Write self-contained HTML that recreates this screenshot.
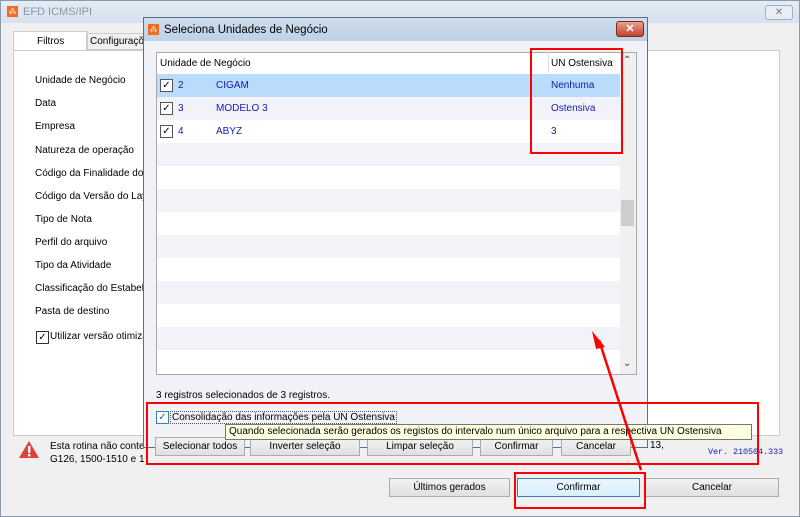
<!DOCTYPE html>
<html><head><meta charset="utf-8"><style>
*{box-sizing:border-box;margin:0;padding:0}
body{width:800px;height:517px;overflow:hidden;background:#f0f0f0;font-family:"Liberation Sans",sans-serif;font-size:10px;color:#000;position:relative}
.a{position:absolute;white-space:nowrap}
.btn{position:absolute;height:19px;border:1px solid #acacac;background:linear-gradient(#f2f2f2,#e0e0e0);text-align:center;line-height:17px;font-size:10px;white-space:nowrap;overflow:hidden}
.lbl{position:absolute;left:35px;font-size:10px;white-space:nowrap}
.cb{position:absolute;width:13px;height:13px;border:1px solid #333;background:#fff;font-size:10px;line-height:11px;text-align:center}
.row{position:absolute;left:157px;width:463px;height:23px}
.red{position:absolute;border:2px solid #f00}
</style></head><body>
<div class="a" style="left:0;top:0;width:800px;height:517px;border:1px solid #8a9aad;background:#f0f0f0"></div>
<div class="a" style="left:1px;top:1px;width:798px;height:22px;background:linear-gradient(#e4ecf5,#d6e2ef)"></div>
<div class="a" style="left:7px;top:6px;width:11px;height:11px;background:#f26b1d;color:#fff;font-size:8px;line-height:11px;text-align:center">⁂</div>
<div class="a" style="left:23px;top:6px;color:#8a96a4;font-size:11px">EFD ICMS/IPI</div>
<div class="a" style="left:765px;top:5px;width:28px;height:15px;border:1px solid #aab;border-radius:3px;background:#e8eef5;text-align:center;font-size:10px;color:#777;line-height:13px">✕</div>
<div class="a" style="left:13px;top:31px;width:74px;height:20px;background:#fff;border:1px solid #ccc;border-bottom:none;padding:4px 0 0 23px">Filtros</div>
<div class="a" style="left:87px;top:33px;width:70px;height:17px;background:#f0f0f0;border:1px solid #ccc;padding:2px 0 0 2px;overflow:hidden">Configuraçõ</div>
<div class="a" style="left:13px;top:50px;width:767px;height:386px;background:#fff;border:1px solid #ccc"></div>
<div class="lbl" style="top:75px">Unidade de Negócio</div>
<div class="lbl" style="top:98px">Data</div>
<div class="lbl" style="top:121px">Empresa</div>
<div class="lbl" style="top:145px">Natureza de operação</div>
<div class="lbl" style="top:168px">Código da Finalidade do A</div>
<div class="lbl" style="top:191px">Código da Versão do Layo</div>
<div class="lbl" style="top:214px">Tipo de Nota</div>
<div class="lbl" style="top:237px">Perfil do arquivo</div>
<div class="lbl" style="top:260px">Tipo da Atividade</div>
<div class="lbl" style="top:283px">Classificação do Estabele</div>
<div class="lbl" style="top:306px">Pasta de destino</div>
<div class="cb" style="left:36px;top:331px">✓</div>
<div class="lbl" style="left:50px;top:331px">Utilizar versão otimiza</div>
<svg class="a" style="left:18px;top:440px" width="22" height="19"><polygon points="11,1 21,18 1,18" fill="#e0403a"/><rect x="10" y="6" width="2.4" height="7" fill="#fff"/><rect x="10" y="14" width="2.4" height="2.4" fill="#fff"/></svg>
<div class="a" style="left:50px;top:440px;line-height:13px">Esta rotina não conte<br>G126, 1500-1510 e 1</div>
<div class="a" style="left:650px;top:440px">13,</div>
<div class="a" style="left:708px;top:447px;color:#1a1aa8;font-family:'Liberation Mono',monospace;font-size:8.5px;letter-spacing:-0.1px">Ver. 210504.333</div>
<div class="btn" style="left:389px;top:478px;width:121px">Últimos gerados</div>
<div class="btn" style="left:517px;top:478px;width:123px;border-color:#3c7fb1;background:linear-gradient(#eaf6fd,#d9f0fc)">Confirmar</div>
<div class="btn" style="left:645px;top:478px;width:134px">Cancelar</div>
<div class="a" style="left:143px;top:17px;width:505px;height:431px;border:1px solid #5a6e88;background:#f0f2f8"></div>
<div class="a" style="left:144px;top:18px;width:503px;height:23px;background:linear-gradient(#cfdded,#bfd1e6)"></div>
<div class="a" style="left:148px;top:24px;width:11px;height:11px;background:#f26b1d;color:#fff;font-size:8px;line-height:11px;text-align:center">⁂</div>
<div class="a" style="left:164px;top:24px;font-size:11.5px">Seleciona Unidades de Negócio</div>
<div class="a" style="left:616px;top:21px;width:28px;height:16px;border:1px solid #7a2c20;border-radius:3px;background:linear-gradient(#e8a090,#c4422c);color:#fff;text-align:center;font-size:11px;line-height:14px;font-weight:bold">✕</div>
<div class="a" style="left:156px;top:52px;width:481px;height:323px;background:#fff;border:1px solid #aaa"></div>
<div class="a" style="left:160px;top:58px">Unidade de Negócio</div>
<div class="a" style="left:548px;top:52px;width:1px;height:21px;background:#ddd"></div>
<div class="a" style="left:551px;top:58px">UN Ostensiva</div>
<div class="row" style="top:74px;background:#b9dcfb"></div>
<div class="row" style="top:97px;background:#f2f3f8"></div>
<div class="row" style="top:143px;background:#f2f3f8"></div>
<div class="row" style="top:189px;background:#f2f3f8"></div>
<div class="row" style="top:235px;background:#f2f3f8"></div>
<div class="row" style="top:281px;background:#f2f3f8"></div>
<div class="row" style="top:327px;background:#f2f3f8"></div>
<div class="cb" style="left:160px;top:79px;border-color:#555">✓</div>
<div class="cb" style="left:160px;top:102px;border-color:#555">✓</div>
<div class="cb" style="left:160px;top:125px;border-color:#555">✓</div>
<div class="a" style="left:178px;top:80px;color:#1a1aa8">2</div><div class="a" style="left:216px;top:80px;color:#1a1aa8">CIGAM</div><div class="a" style="left:551px;top:80px;color:#1a1aa8">Nenhuma</div>
<div class="a" style="left:178px;top:103px;color:#1a1aa8">3</div><div class="a" style="left:216px;top:103px;color:#1a1aa8">MODELO 3</div><div class="a" style="left:551px;top:103px;color:#1a1aa8">Ostensiva</div>
<div class="a" style="left:178px;top:126px;color:#1a1aa8">4</div><div class="a" style="left:216px;top:126px;color:#1a1aa8">ABYZ</div><div class="a" style="left:551px;top:126px;color:#1a1aa8">3</div>
<div class="a" style="left:620px;top:53px;width:16px;height:321px;background:#f0f0f0"></div>
<div class="a" style="left:621px;top:200px;width:13px;height:26px;background:#cdcdcd"></div>
<div class="a" style="left:623px;top:55px;font-size:10px;color:#444">⌃</div>
<div class="a" style="left:623px;top:358px;font-size:10px;color:#444">⌄</div>
<div class="a" style="left:156px;top:390px">3 registros selecionados de 3 registros.</div>
<div class="cb" style="left:156px;top:411px;border-color:#3c7fb1;color:#1a6fc0">✓</div>
<div class="a" style="left:170px;top:411px;border:1px dotted #555;padding:0 1px">Consolidação das informações pela UN Ostensiva</div>
<div class="btn" style="left:155px;top:437px;width:90px">Selecionar todos</div>
<div class="btn" style="left:250px;top:437px;width:110px">Inverter seleção</div>
<div class="btn" style="left:367px;top:437px;width:106px">Limpar seleção</div>
<div class="btn" style="left:480px;top:437px;width:73px">Confirmar</div>
<div class="btn" style="left:561px;top:437px;width:70px">Cancelar</div>
<div class="a" style="left:225px;top:424px;width:527px;height:16px;background:#ffffe1;border:1px solid #767676;font-size:10px;line-height:14px;padding-left:3px;overflow:hidden">Quando selecionada serão gerados os registos do intervalo num único arquivo para a respectiva UN Ostensiva</div>
<div class="red" style="left:530px;top:48px;width:93px;height:106px"></div>
<div class="red" style="left:146px;top:402px;width:613px;height:63px"></div>
<div class="red" style="left:514px;top:472px;width:132px;height:37px"></div>
<svg class="a" style="left:0;top:0" width="800" height="517"><line x1="599" y1="340" x2="641" y2="470" stroke="#f00" stroke-width="2.5"/><polygon points="592,331 605,347 596,349" fill="#f00"/></svg>
</body></html>
